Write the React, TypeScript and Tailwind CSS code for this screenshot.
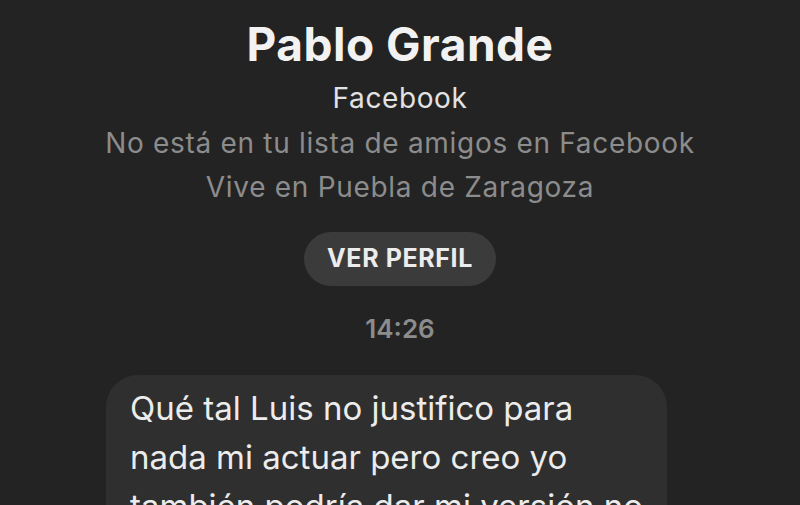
export default function App() {
  return (
    <div
      className="w-[800px] h-[505px] overflow-hidden bg-[#232323] flex flex-col items-center"
      style={{ fontFamily: "Inter, 'Noto Sans', sans-serif" }}
    >
      {/* Profile header */}
      <h1 className="shrink-0 mt-[20px] text-[46px] leading-[48px] font-bold text-[#f2f2f2] tracking-[0.5px]">
        Pablo Grande
      </h1>
      <p className="shrink-0 mt-[8px] text-[28px] leading-[44px] text-[#e2e2e2] tracking-[0.6px]">Facebook</p>
      <p className="shrink-0 mt-[1px] text-[28px] leading-[44px] text-[#8c8c8c] tracking-[0.7px]">
        No está en tu lista de amigos en Facebook
      </p>
      <p className="shrink-0 text-[28px] leading-[44px] text-[#8c8c8c] tracking-[0.7px]">
        Vive en Puebla de Zaragoza
      </p>

      <button className="shrink-0 mt-[23px] h-[54px] w-[192px] rounded-full bg-[#3b3b3b] text-[25px] font-bold text-[#ececec] tracking-[0.6px]">
        VER PERFIL
      </button>

      <p className="shrink-0 mt-[27px] text-[26px] leading-[32px] font-semibold text-[#8c8c8c]">14:26</p>

      {/* Message bubble */}
      <div className="shrink-0 mt-[30px] self-start ml-[106px] w-[561px] rounded-[32px] bg-[#2f2f2f] px-[24px] pt-[9px] pb-[20px]">
        <p className="text-[33px] leading-[49px] text-[#ececec]">
          Qué tal Luis no justifico para nada mi actuar pero creo yo también podría dar mi versión no
        </p>
      </div>
    </div>
  );
}
